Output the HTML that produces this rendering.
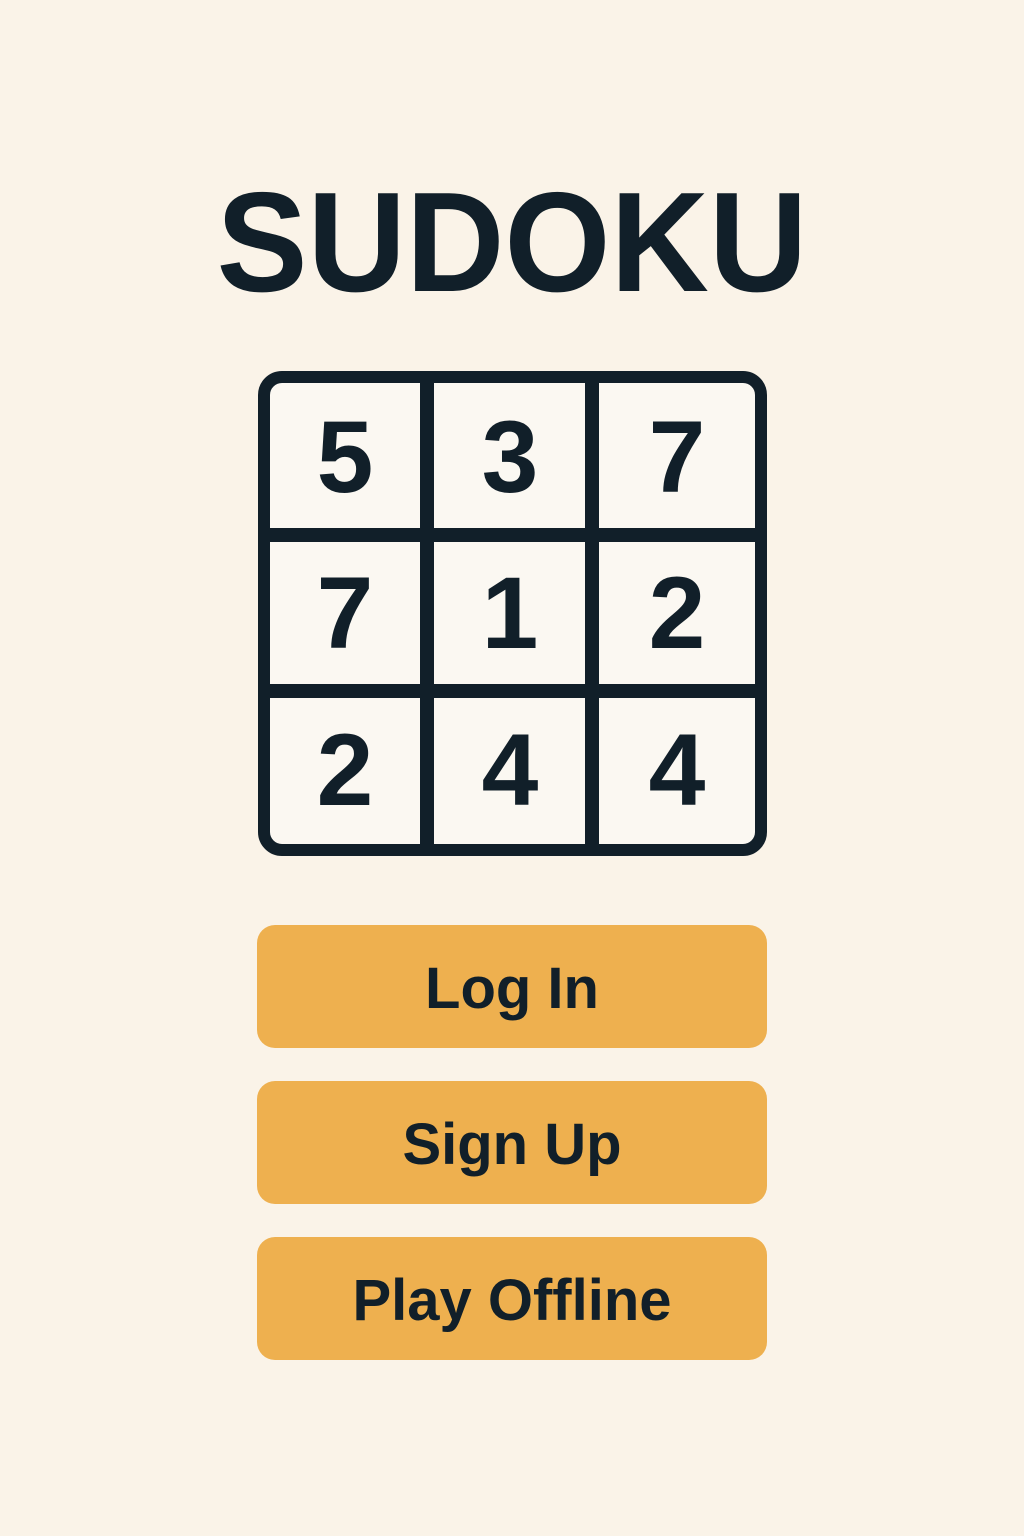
<!DOCTYPE html>
<html><head><meta charset="utf-8"><style>
html,body{margin:0;padding:0}
body{width:1024px;height:1536px;background:#faf3e8;position:relative;overflow:hidden;font-family:"Liberation Sans",sans-serif;color:#111f29}
.title{position:absolute;left:0;width:1024px;top:163px;text-align:center;font-weight:bold;font-size:142px;line-height:160px;transform:scaleX(0.96);transform-origin:512px 0}
.grid{position:absolute;left:258px;top:371px;width:485px;height:461px;border:12px solid #111f29;border-radius:24px;background:#fbf8f2}
.v,.h{position:absolute;background:#111f29}
.v{top:0;bottom:0;width:14px}
.h{left:0;right:0;height:14px}
.d{position:absolute;width:120px;height:120px;line-height:120px;text-align:center;font-weight:bold;font-size:102px;margin:-60px 0 0 -60px}
.btn{position:absolute;left:257px;width:510px;height:123px;background:#eeb04f;border-radius:18px;text-align:center;line-height:127px;font-weight:bold;font-size:58px}
</style></head><body>
<div class="title">SUDOKU</div>
<div class="grid">
<div class="v" style="left:150px"></div><div class="v" style="left:315px"></div>
<div class="h" style="top:145px"></div><div class="h" style="top:301px"></div>
</div>
<div class="d" style="left:345px;top:457px">5</div>
<div class="d" style="left:510px;top:457px">3</div>
<div class="d" style="left:677px;top:457px">7</div>
<div class="d" style="left:345px;top:613px">7</div>
<div class="d" style="left:510px;top:613px">1</div>
<div class="d" style="left:677px;top:613px">2</div>
<div class="d" style="left:345px;top:770px">2</div>
<div class="d" style="left:510px;top:770px">4</div>
<div class="d" style="left:677px;top:770px">4</div>
<div class="btn" style="top:925px">Log In</div>
<div class="btn" style="top:1081px">Sign Up</div>
<div class="btn" style="top:1237px">Play Offline</div>
</body></html>
